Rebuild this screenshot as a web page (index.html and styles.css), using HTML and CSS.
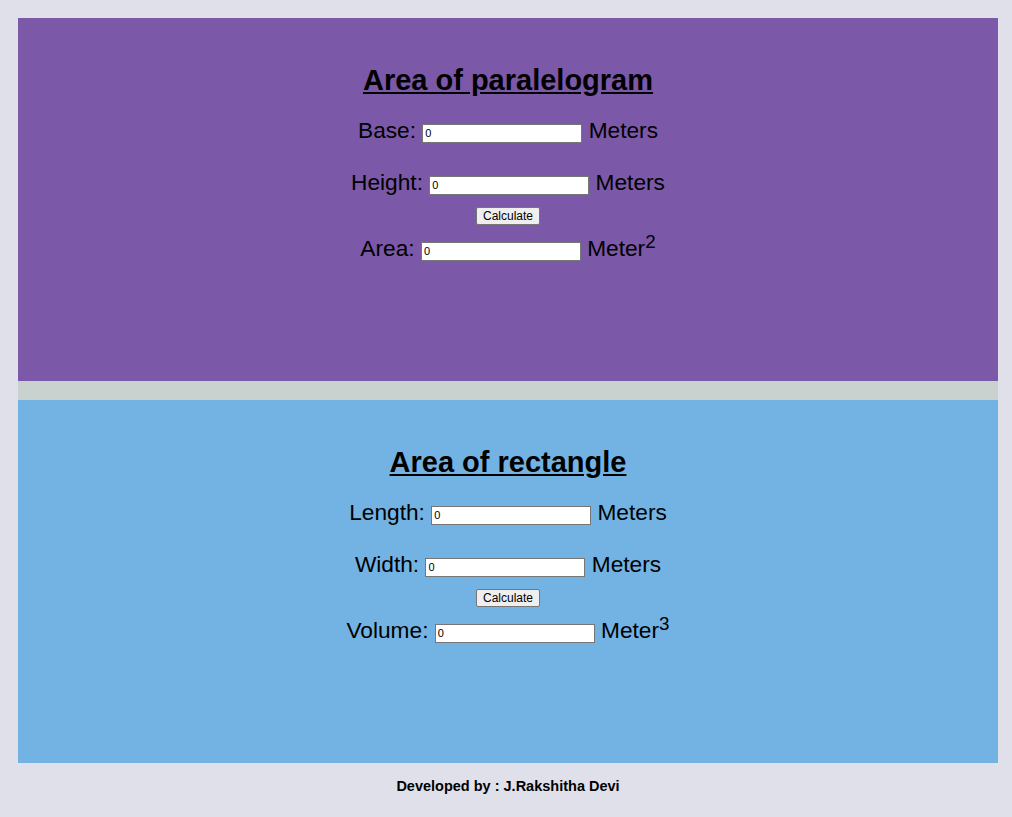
FILE: index.html
```html
<!DOCTYPE html>
<html>
<head>
<meta charset="utf-8">
<title>Area calculator</title>
<link rel="stylesheet" href="styles.css">
</head>
<body>
<main class="stack">
  <section class="panel panel-purple">
    <h1 class="title">Area of paralelogram</h1>
    <div class="row row-first">Base: <input class="field" type="text" value="0"> Meters</div>
    <div class="row row-second">Height: <input class="field" type="text" value="0"> Meters</div>
    <div class="btn-row"><button class="btn">Calculate</button></div>
    <div class="row row-result">Area: <input class="field" type="text" value="0"> Meter<sup class="sup">2</sup></div>
  </section>
  <section class="panel panel-blue">
    <h1 class="title">Area of rectangle</h1>
    <div class="row row-first">Length: <input class="field" type="text" value="0"> Meters</div>
    <div class="row row-second">Width: <input class="field" type="text" value="0"> Meters</div>
    <div class="btn-row"><button class="btn">Calculate</button></div>
    <div class="row row-result">Volume: <input class="field" type="text" value="0"> Meter<sup class="sup">3</sup></div>
  </section>
</main>
<footer class="footer">Developed by : J.Rakshitha Devi</footer>
</body>
</html>
```
FILE: styles.css
```css
html, body {
  margin: 0;
  padding: 0;
}
body {
  background: #e0e0ea;
  font-family: "Liberation Sans", Arial, sans-serif;
  color: #000;
  padding: 18px 14px 0 18px;
}
.stack {
  display: flex;
  flex-direction: column;
  gap: 19px;
  background: #c9d2cf;
  width: 980px;
}
.panel {
  height: 363px;
  box-sizing: border-box;
  padding-top: 45px;
  text-align: center;
}
.panel-purple { background: #7b58a8; }
.panel-blue { background: #72b3e4; }
.title {
  margin: 0;
  font-size: 29px;
  line-height: 34px;
  font-weight: bold;
  text-decoration: underline;
}
.row {
  font-size: 22.7px;
  line-height: 30px;
  height: 30px;
}
.row-first { margin-top: 18px; }
.row-second { margin-top: 22px; }
.row-result { margin-top: 8px; }
.btn-row {
  margin-top: 8px;
  height: 20px;
  line-height: 20px;
}
.field {
  width: 160px;
  height: 19px;
  box-sizing: border-box;
  border: 1px solid #767676;
  padding: 1px 2px;
  font-family: "Liberation Sans", Arial, sans-serif;
  font-size: 11px;
  vertical-align: 1px;
  background: #fff;
}
.btn {
  font-family: "Liberation Sans", Arial, sans-serif;
  font-size: 12px;
  height: 18px;
  padding: 0 6px;
  border: 1px solid #767676;
  border-radius: 2px;
  background: #efefef;
  vertical-align: middle;
}
.sup {
  font-size: 0.83em;
  line-height: 0;
  vertical-align: 0.45em;
}
.footer {
  text-align: center;
  font-weight: bold;
  font-size: 14.5px;
  line-height: 18px;
  padding-top: 14px;
}
```
